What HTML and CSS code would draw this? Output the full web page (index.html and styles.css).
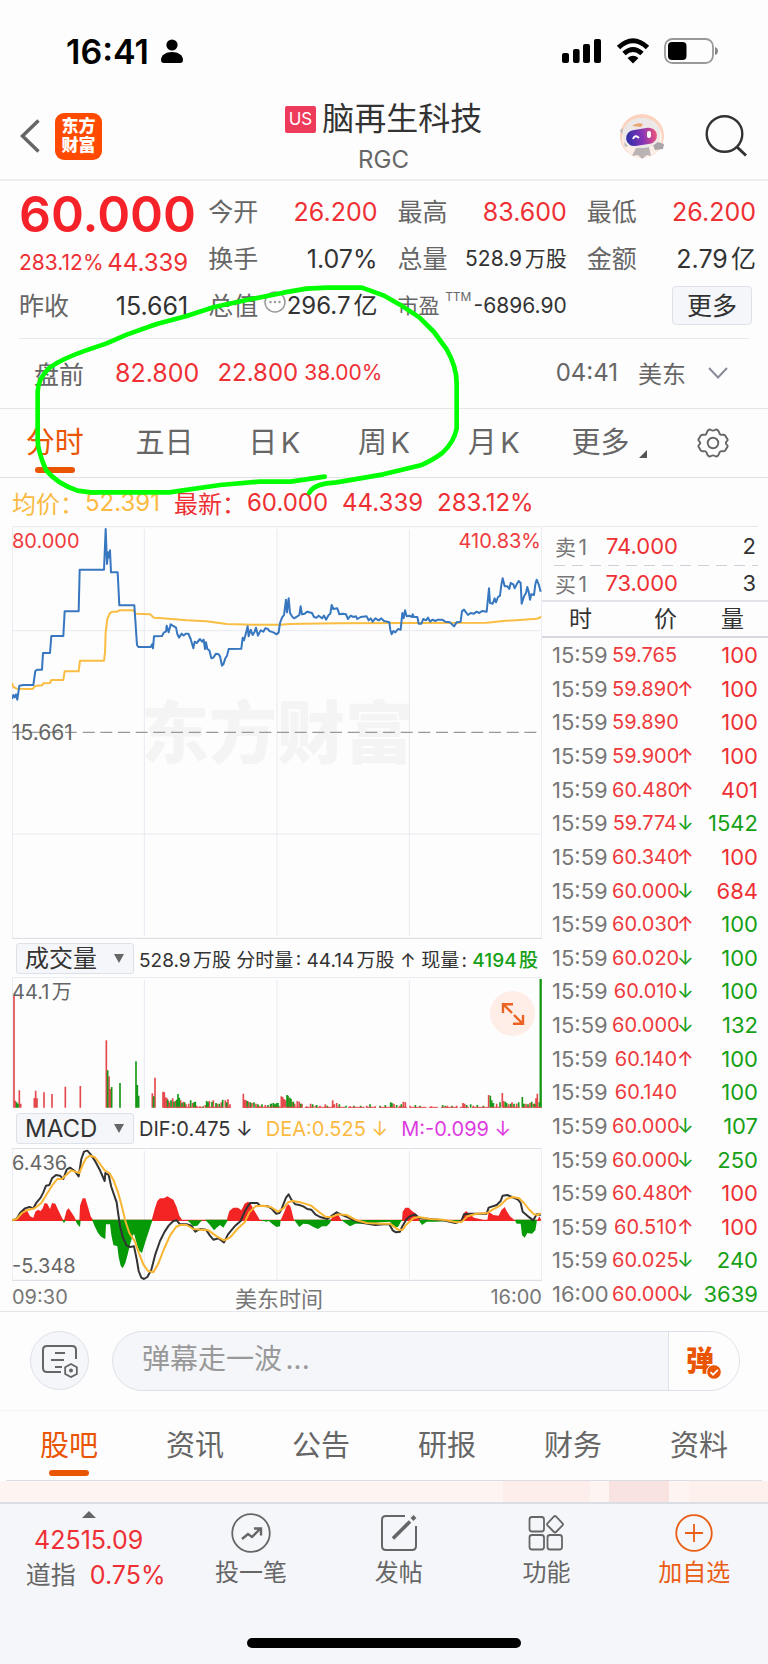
FILE: index.html
```html
<!DOCTYPE html>
<html lang="zh-CN">
<head>
<meta charset="utf-8">
<meta name="viewport" content="width=device-width, initial-scale=1">
<title>脑再生科技 RGC</title>
<link rel="stylesheet" href="styles.css">
</head>
<body>
<div class="status">
  <div class="status-left">
    <span>16:41</span>
    <svg width="22" height="24" viewBox="0 0 22 24"><circle cx="11" cy="6" r="5.6"/><path d="M0 21c0-5 5-8 11-8s11 3 11 8q0 3-3 3H3q-3 0-3-3z"/></svg>
  </div>
  <div class="status-right">
    <svg width="40" height="26" viewBox="0 0 40 26"><rect x="0" y="15" width="7" height="10" rx="2"/><rect x="11" y="11" width="6.600" height="14" rx="2"/><rect x="21" y="6" width="7" height="19" rx="2"/><rect x="32" y="1" width="7" height="24" rx="2"/></svg>
    <svg width="34" height="26" viewBox="0 0 34 26"><g fill="none" stroke="#000" stroke-width="5"><path d="M2.500 9.500Q17-4 31.500 9.500"/><path d="M8 15.500q9-8 18 0"/></g><path d="M17 25.500l-5.500-5.500q5.500-4.500 11 0z"/></svg>
    <svg width="54" height="26" viewBox="0 0 54 26"><rect x="1" y="1" width="48" height="24" rx="7.500" fill="none" stroke="#999" stroke-width="1.800"/><rect x="4" y="4" width="18.500" height="18" rx="4"/><path d="M51 9q3 1 3 4t-3 4z" fill="#888"/></svg>
  </div>
</div>

<header class="header">
  <div class="header-left">
    <button class="plain" aria-label="返回"><svg width="20" height="34" viewBox="0 0 20 34"><path d="M18.500 1.500L2.500 17l16 15.500" fill="none" stroke="#666" stroke-width="3.500"/></svg></button>
    <div class="logo"><span>东方</span><span>财富</span></div>
  </div>
  <div class="header-title">
    <h1><span class="market">US</span>脑再生科技</h1>
    <p>RGC</p>
  </div>
  <div class="header-right">
    <svg width="46" height="46" viewBox="0 0 46 46"><defs><linearGradient id="visor"><stop offset="0" stop-color="#2b2fa8"/><stop offset=".55" stop-color="#8a35b5"/><stop offset="1" stop-color="#f0557a"/></linearGradient></defs><circle cx="23" cy="23" r="22" fill="#fbd3bf"/><circle cx="23" cy="25" r="20" fill="#fdeee7"/><path d="M17 35l-4 8 6-1 4 4 5-4 4 1-2-9z" fill="#b9b3b3"/><path d="M34 32l5-3 6 2-1 5-8 1z" fill="#a9a5aa"/><path d="M4 24C3 12 12 5 23 5s19 7 18 16c0 9-8 14-18 14S5 32 4 24z" fill="#ece8e8"/><path d="M4 15l-3 2 2 5zM5 29l4 4-3 1z" fill="#bbb"/><path d="M13 13q5-4 11-2l-2 3z" fill="#eaa66f"/><rect x="7" y="16" width="31" height="16" rx="8" fill="url(#visor)" transform="rotate(-9 22 24)"/><path d="M14 26q2-5 6-1" fill="none" stroke="#fff" stroke-width="2"/><rect x="28" y="18" width="4" height="7" rx="2" fill="#fff"/></svg>
    <button class="plain" aria-label="搜索"><svg width="42" height="42" viewBox="0 0 42 42"><g fill="none" stroke="#333"><circle cx="19.500" cy="19" r="17.800" stroke-width="2.400"/><path d="M32 32l9 8.500" stroke-width="3"/></g></svg></button>
  </div>
</header>

<section class="summary">
  <div class="quote">
    <div class="price">60.000</div>
    <div class="pair"><span class="k">今开</span><span class="up">26.200</span></div>
    <div class="pair"><span class="k">最高</span><span class="up">83.600</span></div>
    <div class="pair"><span class="k">最低</span><span class="up">26.200</span></div>
    <div class="pair change"><span class="up small">283.12%</span><span class="up mid">44.339</span></div>
    <div class="pair"><span class="k">换手</span><span>1.07%</span></div>
    <div class="pair"><span class="k">总量</span><span class="small">528.9万股</span></div>
    <div class="pair"><span class="k">金额</span><span>2.79亿</span></div>
    <div class="pair"><span class="k">昨收</span><span>15.661</span></div>
    <div class="pair"><span class="k">总值</span><svg class="hint" width="22" height="22" viewBox="0 0 22 22"><circle cx="11" cy="11" r="10" fill="none" stroke="#999" stroke-width="1.500"/><circle cx="6.500" cy="11" r="1.200"/><circle cx="11" cy="11" r="1.200"/><circle cx="15.500" cy="11" r="1.200"/></svg><span class="mid">296.7亿</span></div>
    <div class="pair"><span class="k small">市盈<sup>TTM</sup></span><span class="small">-6896.90</span></div>
    <div class="pair end"><button class="more">更多</button></div>
  </div>
  <div class="premarket">
    <span class="k">盘前</span><span class="up pm-price">82.800</span><span class="up mid">22.800</span><span class="up small pm-pct">38.00%</span>
    <span class="k mid pm-time">04:41</span><span class="k mid">美东</span>
    <button class="plain" aria-label="展开"><svg width="20" height="12" viewBox="0 0 20 12"><path d="M1 1l9 9.500L19 1" fill="none" stroke="#888b98" stroke-width="2"/></svg></button>
  </div>
  <nav class="periods">
    <button class="tab active">分时</button>
    <button class="tab">五日</button>
    <button class="tab">日K</button>
    <button class="tab">周K</button>
    <button class="tab">月K</button>
    <button class="tab">更多<svg class="corner" width="8" height="8" viewBox="0 0 8 8"><path d="M8 0v8H0z" fill="#555"/></svg></button>
    <button class="tab" aria-label="设置"><svg width="32" height="30" viewBox="0 0 32 30"><g fill="none" stroke="#666" stroke-width="1.900"><path d="M11 2.500Q12.500 1 14 2q2 1.300 4 0 1.500-1 3 .5 1 1 1.500 3 .8 1.800 3 1.300 2.500-.3 3 1.200l1.800 3q.8 1.500-.5 2.300-2 1.700 0 3.400 1.300.8.5 2.300l-1.800 3q-.5 1.500-3 1.200-2.200-.5-3 1.300-.5 2-1.500 3-1.500 1.500-3 .5-2-1.300-4 0-1.500 1-3-.5-1-1-1.500-3-.8-1.800-3-1.300-2.500.3-3-1.200L1.700 19q-.8-1.500.5-2.300 2-1.700 0-3.400-1.300-.8-.5-2.300l1.800-3q.5-1.500 3-1.200 2.200.5 3-1.300.5-2 1.500-3z"/><circle cx="16" cy="15" r="5.300"/></g></svg></button>
  </nav>
  <svg class="marker" viewBox="0 0 2304 960" preserveAspectRatio="none" aria-hidden="true"><path d="M974 890L872 905H778L660 915 508 937H272L232 932C190 917 155 892 138 870 125 840 113 810 113 780V635C114 600 130 580 150 562Q190 535 256 512L320 490 380 464 470 432 560 408 640 382 750 358 850 338 920 326 980 323H1086L1150 346 1200 374 1258 412 1302 456 1340 508Q1370 560 1370 610V746Q1362 786 1328 818 1300 840 1262 856L1150 883 1010 907 980 910Q940 916 928 938"/></svg>
</section>

<div class="legend"><span class="avg name">均价：</span><span class="avg">52.391</span><span class="up name">最新：</span><span class="up">60.000</span><span class="up">44.339</span><span class="up">283.12%</span></div>

<main class="board">
  <section class="charts">
    <div class="chart chart-price">
      <span class="watermark">东方财富</span>
      <svg viewBox="36 51 1590 1239" preserveAspectRatio="none">
        <g class="grid"><path d="M36 53H1624M37 53V1288M433 60V1280M831 60V1280M1228 60V1280M1625 53V1290M36 365H1626M36 975H1626"/><path class="axis" d="M36 1288H1626"/></g>
        <path d="M36 670H230M248 670H1626" stroke="#999" stroke-width="4" stroke-dasharray="36 17" fill="none"/>
        <g fill="none" stroke-width="6" stroke-linejoin="round">
          <path stroke="#f9bd43" d="M36 522L40 534 50 539 98 540 104 532 110 530 126 529 130 523 150 522 154 513 190 513 194 487 236 487 240 455 312 455 315 430 317 370 322 330 330 312 338 308 352 308 358 304 400 304 408 314 450 316 462 326 478 327 560 334 620 337 680 345 760 347 840 347 870 345 910 344 1010 343 1460 341 1510 336 1570 332 1610 329 1618 327 1623 322"/>
          <path stroke="#3777bf" d="M36 570L40 558 44 565 48 556 52 572 58 530 70 528 100 528 106 486 112 482 126 482 129 432 150 432 154 381 190 381 194 307 236 307 239 182 312 182 317 60 321 165 325 130 328 145 330 124 333 190 353 190 358 289 403 289 411 408 415 414 452 414 457 405 459 418 462 382 486 381 492 370 498 368 500 350 506 370 512 346 518 350 522 352 528 356 532 375 537 386 545 374 551 380 557 374 565 374 572 390 580 418 584 398 590 402 600 390 606 398 611 392 615 420 618 400 622 420 628 424 634 448 640 446 648 434 656 436 660 442 666 470 670 466 676 448 681 440 686 420 724 419 728 386 732 394 738 372 743 352 746 382 752 362 758 378 764 368 768 356 774 380 782 364 790 368 796 358 804 360 808 366 820 370 830 376 836 370"/>
          <path transform="translate(810 0)" stroke="#3777bf" d="M20 376L26 370 30 342 36 326 42 318 48 272 51 310 56 268 60 312 66 322 72 328 82 322 88 318 92 292 96 316 104 314 112 308 126 312 132 324 140 326 146 320 156 328 162 320 168 332 176 318 181 314 185 288 190 300 202 298 208 316 218 314 228 316 234 330 242 320 250 324 258 322 262 330 272 324 290 322 296 334 302 328 308 338 316 328 326 334 334 328 342 336 358 340 361 362 365 376 370 366 376 370 384 360 392 362 397 312 401 328 405 304 410 322 418 320 426 324 428 316 432 324 442 324 446 344 454 344 460 330 468 334 474 326 480 338 488 332 496 336 504 332 516 332 526 338 540 340 552 352 560 340 572 338 576 306 582 302 588 310 594 318 602 312 612 314 620 308 628 312 636 306 650 308 657 238 660 282 668 284 674 268 678 280 684 264 690 260 694 228 698 208 704 232 712 232 718 240 722 222 730 226 734 238 740 226 746 216 752 222 755 284 762 262 768 252 772 234 776 248 780 272 784 256 792 258 796 226 800 212 806 226 812 248"/>
        </g>
      </svg>
      <span class="tag top up">80.000</span><span class="tag top right up">410.83%</span><span class="tag middle">15.661</span>
    </div>
    <div class="indicator">
      <span class="pick"><select aria-label="指标"><option>成交量</option></select></span>
      <span class="readout">528.9万股 分时量: 44.14万股 ↑ 现量: <b class="down">4194股</b></span>
    </div>
    <div class="chart chart-volume">
      <svg viewBox="36 144 1590 396" preserveAspectRatio="none">
        <g class="grid"><path d="M36 145H1626M37 145V538M433 152V538M831 152V538M1228 152V538M1625 145V540"/></g>
        <g fill="none" stroke-width="5">
          <path stroke="#e5494d" d="M42 536V200M46 536V515M58 536V484M62 536V524M103 536V507M107 536V485M111 536V508M132 536V490M156 536V495M196 536V473M241 536V471M319 536V334M327 536V442M331 536V480M457 536V493M465 536V446M489 536V488M493 536V490M497 536V505M501 536V508M505 536V515M509 536V520M518 536V508M526 536V516M542 536V514M550 536V518M558 536V526M566 536V524M578 536V522M590 536V530M600 536V532M616 536V528M628 536V516M640 536V514M652 536V524M664 536V520M676 536V514M684 536V511M690 536V526M730 536V494M734 536V512M738 536V514M746 536V518M756 536V522M768 536V524M780 536V530M796 536V528"/>
          <path stroke="#189818" d="M50 536V520M54 536V524M323 536V424M335 536V474M360 536V462M408 536V397M412 536V468M416 536V500M461 536V502M503 536V512M513 536V514M522 536V518M530 536V512M534 536V495M538 536V506M546 536V522M554 536V520M572 536V514M582 536V520M586 536V518M610 536V532M620 536V516M624 536V520M636 536V518M648 536V522M658 536V524M668 536V512M680 536V520M742 536V516M751 536V520M762 536V520M774 536V526M786 536V526M804 536V528M814 536V524M820 536V522M826 536V526M834 536V522"/>
          <g transform="translate(810 0)">
            <path stroke="#e5494d" d="M6 536V530M34 536V502M38 536V504M42 536V510M46 536V514M56 536V506M66 536V518M74 536V524M82 536V516M88 536V518M96 536V524M110 536V532M122 536V524M136 536V530M150 536V530M166 536V526M188 536V514M193 536V526M200 536V522M240 536V532M290 536V530M316 536V532M372 536V524M390 536V530M400 536V518M406 536V520M420 536V530M484 536V532M532 536V530M560 536V530M579 536V522M584 536V524M610 536V530M656 536V498M680 536V524M697 536V492M701 536V516M716 536V526M726 536V520M740 536V524M768 536V524M780 536V522M790 536V524M798 536V508M802 536V494"/>
            <path stroke="#189818" d="M2 536V524M12 536V524M20 536V522M26 536V530M51 536V498M54 536V500M60 536V506M63 536V510M70 536V518M92 536V524M128 536V526M140 536V528M172 536V530M208 536V526M228 536V530M252 536V530M272 536V530M300 536V526M330 536V530M346 536V528M362 536V520M366 536V522M380 536V528M394 536V526M436 536V528M450 536V530M518 536V528M526 536V530M546 536V530M590 536V528M602 536V526M622 536V528M640 536V530M661 536V500M665 536V514M670 536V522M690 536V520M706 536V518M710 536V522M722 536V524M732 536V524M746 536V520M757 536V504M762 536V524M774 536V526M785 536V518M794 536V524M808 536V520"/>
            <path stroke="#159815" stroke-width="7" d="M812 536V150"/>
          </g>
          <path stroke="#e5494d" stroke-width="3" stroke-dasharray="28 9 50 6" d="M490 535H692M728 535H1624"/>
        </g>
      </svg>
      <span class="tag top">44.1万</span>
      <button class="expand" aria-label="全屏"><svg width="24" height="24" viewBox="0 0 24 24"><g fill="none" stroke="#ea6322" stroke-width="2.400"><path d="M2 11V2.200h10M2 2l9 9M22 13v8.800H12M22 22l-9-9"/></g></svg></button>
    </div>
    <div class="indicator tall">
      <span class="pick"><select aria-label="副图指标"><option>MACD</option></select></span>
      <span class="readout macd"><span>DIF:0.475 ↓</span><span class="avg">DEA:0.525 ↓</span><span class="m">M:-0.099 ↓</span></span>
    </div>
    <div class="chart chart-macd">
      <svg viewBox="36 657 1590 399" preserveAspectRatio="none">
        <g class="grid"><path d="M37 658V1055M433 666V1050M831 666V1050M1228 666V1050M1625 658V1055"/><path class="axis" d="M36 658H1626M36 1054H1626"/></g>
        <path fill="#f22424" d="M36 872H1622V876H36ZM40 874L66 850 74 840 82 846 90 862 100 866 106 848 114 842 122 846 128 838 134 822 142 824 150 840 156 822 166 824 176 846 186 866 190 874ZM192 874L200 844 206 838 214 850 222 862 228 874ZM238 874L240 830 248 808 256 808 264 834 272 862 280 874ZM455 874L464 840 472 816 480 808 492 808 502 802 512 808 520 812 530 834 538 860 546 872 570 874ZM680 874L688 846 700 836 714 836 724 844 734 824 744 818 752 824 760 840 772 860 780 874ZM842 874L854 846 860 830 866 826 872 834 880 866 882 874ZM990 874L1000 862 1014 856 1020 866 1024 874ZM1206 874L1208 848 1216 836 1226 836 1236 846 1250 856 1260 872 1262 874ZM1384 874L1390 854 1398 846 1410 856 1422 866 1450 872 1460 874ZM1462 874L1466 848 1480 858 1496 860 1504 844 1514 834 1520 846 1530 862 1544 874ZM1612 874L1618 862 1624 874Z"/>
        <path fill="#069b06" d="M186 874L192 882 198 874ZM226 874L232 886 240 894 242 874ZM276 872L284 892 294 912 304 924 316 930 318 886 330 886 334 918 340 948 352 952 356 984 362 1010 368 1018 376 1002 382 980 392 940 398 920 402 914 412 950 418 966 426 972 432 952 440 926 450 896 458 872ZM562 874L580 892 592 890 602 878 608 874ZM615 872L628 886 642 904 650 896 660 888 670 896 680 880 684 872ZM780 873L800 878 806 875 818 886 830 894 840 892 842 873ZM882 872L898 894 910 884 926 886 940 894 954 900 966 892 980 892 990 882 994 872ZM1024 873L1036 882 1050 892 1066 884 1110 884 1140 880 1170 878 1180 894 1194 894 1204 876 1208 873ZM1256 873L1266 888 1280 878 1310 878 1350 876 1385 880 1388 873ZM1544 872L1550 884 1562 884 1566 918 1574 926 1582 912 1596 914 1606 904 1610 880 1610 872Z"/>
        <g fill="none" stroke-width="6" stroke-linejoin="round">
          <path stroke="#333" d="M36 874L50 870 60 852 75 838 88 834 100 838 110 820 122 806 130 790 138 770 148 768 156 748 168 738 180 740 190 750 200 722 210 716 224 726 236 742 244 690 252 668 262 665 272 676 284 694 300 724 314 756 316 732 326 738 334 774 350 820 354 850 360 890 368 924 380 950 390 954 402 952 410 990 416 1026 424 1046 432 1050 442 1044 454 1022 466 976 480 936 494 908 506 890 520 876 530 874 540 886 560 886 574 890 586 908 600 900 618 902 630 920 640 932 656 928 672 940 684 916 704 892 722 876 736 844 750 822 772 822 780 830 804 832 816 840 828 854 838 852 844 842 850 826 858 806 866 796 874 812 886 826 898 828 910 832 922 840 934 842 946 856 960 864 982 870 996 860 1010 850 1022 856 1042 864 1062 874 1090 882 1126 888 1150 886 1168 886 1178 904 1188 910 1200 908 1208 890 1220 870 1230 862 1244 856 1260 868 1290 870 1330 874 1366 882 1384 876 1392 856 1410 854 1460 854 1466 836 1490 828 1502 816 1508 800 1522 798 1536 804 1554 812 1562 822 1568 848 1584 862 1600 874 1610 856 1622 858"/>
          <path stroke="#f9b52f" d="M36 874L50 870 66 852 80 844 104 838 124 822 140 796 156 770 172 750 186 750 196 740 214 724 238 732 248 708 258 688 270 680 284 684 298 702 314 724 328 732 340 752 354 790 366 834 376 876 388 912 404 936 416 970 430 1006 444 1026 460 1030 474 1006 492 960 510 920 528 894 540 888 560 888 580 900 604 902 626 904 650 922 672 934 690 926 712 900 734 880 748 850 766 832 790 830 812 834 834 848 850 838 864 820 878 816 902 820 934 830 958 850 978 864 994 864 1014 856 1040 858 1070 874 1100 882 1140 884 1170 884 1194 902 1208 902 1218 888 1240 868 1256 864 1290 870 1330 872 1370 880 1386 878 1402 862 1430 854 1462 852 1474 844 1500 830 1520 810 1538 804 1558 808 1572 822 1586 840 1602 856 1614 858 1622 852"/>
        </g>
      </svg>
      <span class="tag top">6.436</span><span class="tag bottom">-5.348</span>
    </div>
    <div class="times"><span>09:30</span><span class="zone">美东时间</span><span>16:00</span></div>
  </section>

  <aside class="book">
    <div class="level"><span>卖1</span><span class="up">74.000</span><span class="lot">2</span></div>
    <div class="level buy"><span>买1</span><span class="up">73.000</span><span class="lot">3</span></div>
    <table class="ticks">
      <thead><tr><th>时</th><th>价</th><th></th><th>量</th></tr></thead>
      <tbody>
        <tr><td>15:59</td><td>59.765</td><td></td><td class="up">100</td></tr>
        <tr><td>15:59</td><td>59.890</td><td class="up">↑</td><td class="up">100</td></tr>
        <tr><td>15:59</td><td>59.890</td><td></td><td class="up">100</td></tr>
        <tr><td>15:59</td><td>59.900</td><td class="up">↑</td><td class="up">100</td></tr>
        <tr><td>15:59</td><td>60.480</td><td class="up">↑</td><td class="up">401</td></tr>
        <tr><td>15:59</td><td>59.774</td><td class="down">↓</td><td class="down">1542</td></tr>
        <tr><td>15:59</td><td>60.340</td><td class="up">↑</td><td class="up">100</td></tr>
        <tr><td>15:59</td><td>60.000</td><td class="down">↓</td><td class="up">684</td></tr>
        <tr><td>15:59</td><td>60.030</td><td class="up">↑</td><td class="down">100</td></tr>
        <tr><td>15:59</td><td>60.020</td><td class="down">↓</td><td class="down">100</td></tr>
        <tr><td>15:59</td><td>60.010</td><td class="down">↓</td><td class="down">100</td></tr>
        <tr><td>15:59</td><td>60.000</td><td class="down">↓</td><td class="down">132</td></tr>
        <tr><td>15:59</td><td>60.140</td><td class="up">↑</td><td class="down">100</td></tr>
        <tr><td>15:59</td><td>60.140</td><td></td><td class="down">100</td></tr>
        <tr><td>15:59</td><td>60.000</td><td class="down">↓</td><td class="down">107</td></tr>
        <tr><td>15:59</td><td>60.000</td><td class="down">↓</td><td class="down">250</td></tr>
        <tr><td>15:59</td><td>60.480</td><td class="up">↑</td><td class="up">100</td></tr>
        <tr><td>15:59</td><td>60.510</td><td class="up">↑</td><td class="up">100</td></tr>
        <tr><td>15:59</td><td>60.025</td><td class="down">↓</td><td class="down">240</td></tr>
        <tr><td>16:00</td><td>60.000</td><td class="down">↓</td><td class="down">3639</td></tr>
      </tbody>
    </table>
  </aside>
</main>

<div class="comment">
  <button class="round" aria-label="弹幕设置"><svg width="38" height="34" viewBox="0 0 38 34"><g fill="none" stroke="#666" stroke-width="2"><path d="M20 28H6q-4 0-4-4V6q0-4 4-4h25q4 0 4 4v9"/><path d="M14 9h10M10 16h13M14 23h7"/><path d="M30 19.500l6.500 3.500v7.500L30 34l-6.500-3.500V23z" transform="translate(3 2.500) scale(.9)"/></g><circle cx="30" cy="26.500" r="2" fill="#666"/></svg></button>
  <div class="field">
    <input type="text" placeholder="弹幕走一波..." aria-label="弹幕">
    <button class="send" aria-label="弹幕开关"><span>弹</span><svg width="16" height="16" viewBox="0 0 16 16"><circle cx="8" cy="8" r="7.300" fill="#ea5504" stroke="#fff"/><path d="M4.500 8l2.500 2.800 4.800-5" fill="none" stroke="#fff" stroke-width="1.800"/></svg></button>
  </div>
</div>

<nav class="sections">
  <button class="tab active">股吧</button><button class="tab">资讯</button><button class="tab">公告</button><button class="tab">研报</button><button class="tab">财务</button><button class="tab">资料</button>
</nav>
<div class="banner"></div>

<footer class="dock">
  <div class="dock-row">
    <button class="index"><svg width="14" height="7" viewBox="0 0 14 7"><path d="M7 0l7 7H0z" fill="#666"/></svg><span class="up">42515.09</span><span class="index-line">道指<span class="up">0.75%</span></span></button>
    <button class="item"><svg width="40" height="40" viewBox="0 0 40 40"><g fill="none" stroke="#666"><circle cx="20" cy="20" r="18.800" stroke-width="1.800"/><path d="M11 26l6-5 4 3 8-8M23 15.500h7v7" stroke-width="2.400"/></g></svg>投一笔</button>
    <button class="item"><svg width="40" height="40" viewBox="0 0 40 40"><g fill="none" stroke="#666" stroke-width="2"><path d="M26 3H7Q3 3 3 7v26q0 4 4 4h26q4 0 4-4V13"/><path d="M14 25.500L31 8.500" stroke-width="3.600"/><path d="M33 6.500l3-3" stroke-width="4"/></g></svg>发帖</button>
    <button class="item"><svg width="40" height="40" viewBox="0 0 40 40"><g fill="none" stroke="#666" stroke-width="1.800"><rect x="3.500" y="4" width="14.500" height="14.500" rx="2.500"/><rect x="3.500" y="22" width="14.500" height="14.500" rx="2.500"/><rect x="21.500" y="22" width="14.500" height="14.500" rx="2.500"/><path d="M28 3.500q1-1 2 0l6.500 6.800q1 1 0 2L30 19q-1 1-2 0l-6.500-6.700q-1-1 0-2z"/></g></svg>功能</button>
    <button class="item add"><svg width="40" height="40" viewBox="0 0 40 40"><g fill="none" stroke="#ea5d14" stroke-width="1.800"><circle cx="20" cy="20" r="17.800"/><path d="M11 20h18M20 11v18"/></g></svg>加自选</button>
  </div>
  <div class="home"></div>
</footer>
</body>
</html>
```

FILE: styles.css
```css
* { box-sizing: border-box; }
body {
  margin: 0;
  min-height: 100vh;
  display: flex;
  flex-direction: column;
  background: #fdfdfd;
  color: #333;
  font-family: Inter, "Noto Sans CJK SC", sans-serif;
  font-size: 25px;
  text-autospace: normal;
}
button, input, select { font: inherit; color: inherit; }
button { border: 0; padding: 0; background: none; }
svg { display: block; flex: none; }
.plain { display: flex; }
.up { color: #ee3034; }
.down { color: #16a016; }
.avg { color: #fbba41; }
.small { font-size: 21px; }
.mid { font-size: 24px; }
.k { color: #666; }

/* status bar */
.status { display: flex; justify-content: space-between; align-items: center; height: 99px; padding: 3px 50px 0 66px; color: #000; }
.status-left, .status-right { display: flex; align-items: center; }
.status-left { gap: 12px; font-size: 34px; font-weight: 600; }
.status-right { gap: 14px; }

/* header */
.header { display: grid; grid-template-columns: 1fr auto 1fr; align-items: center; padding: 0 21px 6px 20px; border-bottom: 2px solid #eee; }
.header-left { display: flex; align-items: center; gap: 15px; }
.logo { display: flex; flex-direction: column; align-items: center; justify-content: center; width: 47px; height: 47px; border-radius: 9px; background: #ff4a00; color: #fff; font-size: 17px; font-weight: 900; line-height: 19px; }
.header-title h1 { display: flex; align-items: center; gap: 6px; margin: 0; font-size: 32px; font-weight: 400; line-height: 40px; }
.header-title p { margin: 8px 0 0; text-align: center; font-size: 24px; line-height: 26px; color: #666; }
.market { padding: 0 4px; border-radius: 2px; background: #ee3a5b; color: #fff; font-size: 17px; line-height: 27px; }
.header-right { display: flex; justify-content: flex-end; align-items: center; gap: 40px; }

/* quote */
.summary { position: relative; }
.quote { display: grid; grid-template-columns: repeat(4, minmax(0, 1fr)); grid-auto-rows: 47px; column-gap: 20px; margin-bottom: 9px; padding: 7px 12px 0 19px; }
.price { color: #f5222a; font-size: 50px; font-weight: 600; line-height: 52px; }
.pair { display: flex; justify-content: space-between; align-items: center; white-space: nowrap; line-height: 30px; }
.change { padding-top: 8px; }
.end { justify-content: flex-end; }
.hint { fill: #999; margin: 0 -4px 8px 0; }
.pair sup { font-size: 12px; line-height: 0; vertical-align: 12px; margin-left: 3px; }
.more { width: 80px; height: 39px; margin-right: 4px; border: 1px solid #dfe1ea; border-radius: 4px; background: #f5f6f9; }
.premarket { display: flex; align-items: center; height: 70px; margin: 0 19px; padding: 0 21px 2px 15px; border-top: 1px solid #e8e8ec; }
.pm-price { margin: 0 18px 0 31px; }
.pm-pct { margin-left: 6px; }
.pm-time { margin: 0 20px 0 auto; }
.premarket .plain { margin-left: 22px; }
.tab { position: relative; display: flex; align-items: center; justify-content: center; color: #666; font-size: 29px; line-height: 40px; }
.active { color: #ea5504; }
.active::after { content: ""; position: absolute; bottom: 4px; left: 50%; width: 40px; height: 6px; margin-left: -20px; border-radius: 3px; background: #ea5504; }
.periods { display: grid; grid-template-columns: repeat(7, 1fr); height: 70px; border-top: 1px solid #e4e4ea; border-bottom: 1px solid #e0e0e6; }
.corner { align-self: flex-end; margin: 0 -12px 19px 10px; }
.marker { position: absolute; left: 0; top: -1px; width: 100%; height: 320px; fill: none; stroke: #0f0; stroke-width: 14; stroke-linecap: round; stroke-linejoin: round; pointer-events: none; z-index: 2; }

.legend { display: flex; align-items: center; height: 48px; padding-left: 12px; gap: 14px; font-size: 24px; white-space: nowrap; }
.legend .name { margin-right: -13px; }

/* charts */
.board { display: flex; border-bottom: 1px solid #e4e4ea; }
.charts { flex: 1; min-width: 0; padding-left: 12px; }
.chart { position: relative; }
.chart svg { width: 100%; height: 100%; }
.chart > svg { position: relative; }
.chart-price { height: 413px; }
.chart-volume { height: 132px; }
.chart-macd { height: 133px; }
.grid path { fill: none; stroke: #e9eaf2; stroke-width: 3; }
.grid .axis { stroke: #d8d9e2; }
.watermark { position: absolute; left: 0; right: 0; top: 50%; margin-top: -48px; text-align: center; color: #f4f4f4; font-size: 68px; font-weight: 900; line-height: 96px; }
.tag { position: absolute; left: 0; font-size: 20px; line-height: 24px; color: #666; }
.tag.up { color: #ee3a3c; }
.top { top: 3px; }
.middle { top: 50%; margin-top: -12px; font-size: 21px; }
.bottom { bottom: 3px; }
.right { left: auto; right: 1px; }
.indicator { display: flex; align-items: center; height: 38px; padding-left: 4px; gap: 5px; }
.tall { height: 39px; }
.pick { position: relative; flex: none; width: 118px; height: 31px; }
.pick select { appearance: none; width: 100%; height: 100%; padding: 0 0 0 8px; border: 1px solid #dfe1ea; border-radius: 3px; background: #f5f6f9; font-size: 24px; line-height: 29px; }
.pick::after { content: ""; position: absolute; right: 10px; top: 11px; border: 5px solid transparent; border-top: 9px solid #666; border-bottom: 0; pointer-events: none; }
.readout { font-size: 19px; white-space: nowrap; }
.readout b { font-weight: 500; }
.macd { display: flex; gap: 13px; font-size: 20px; }
.m { color: #dc3be0; }
.expand { position: absolute; right: 7px; top: 14px; display: flex; align-items: center; justify-content: center; width: 45px; height: 45px; border-radius: 50%; background: #feeee7; }
.chart .expand svg { width: 24px; height: 24px; }
.times { display: flex; justify-content: space-between; align-items: center; height: 29px; padding-top: 2px; font-size: 20px; color: #777; }
.zone { font-size: 22px; }

/* order book */
.book { flex: 0 0 226px; }
.level { display: grid; grid-template-columns: 44px 79px 1fr; align-items: center; height: 39px; margin: 0 10px 0 1px; padding: 0 2px 0 12px; border-top: 1px solid #e6e6ec; font-size: 22px; }
.level span:first-child { color: #777; font-size: 21px; }
.level span:nth-child(2), .lot { text-align: right; }
.buy { height: 35px; border-top: 0; background: repeating-linear-gradient(90deg, #cfd0da 0 11px, transparent 11px 18px) 11px 0 / 100% 1px no-repeat; }
.ticks { width: 100%; height: 711px; table-layout: fixed; border-collapse: collapse; font-size: 20px; line-height: 24px; white-space: nowrap; }
.ticks th { height: 36px; padding: 0; border-top: 2px solid #e3e3ea; border-bottom: 2px solid #d8d8e0; font-size: 23px; font-weight: 400; }
.ticks th:nth-child(1) { width: 70px; padding-left: 7px; }
.ticks th:nth-child(2) { width: 65px; text-align: right; }
.ticks th:nth-child(3) { width: 16px; }
.ticks th:nth-child(4) { text-align: right; padding-right: 24px; }
.ticks td { padding: 0; text-align: right; }
.ticks td:nth-child(1) { padding-left: 10px; text-align: left; color: #777; font-size: 22px; }
.ticks td:nth-child(2) { color: #ee3a3c; }
.ticks td:nth-child(3) { text-align: center; }
.ticks td:nth-child(4) { padding-right: 10px; font-size: 22px; }

/* comments */
.comment { display: flex; gap: 23px; padding: 19px 28px 19px 30px; border-bottom: 1px solid #f4f4f6; }
.round { display: flex; align-items: center; justify-content: center; flex: none; width: 59px; height: 59px; border: 1px solid #dfe1ea; border-radius: 50%; background: #f5f6f9; }
.field { display: flex; flex: 1; min-width: 0; height: 60px; border: 1px solid #dfe1ea; border-radius: 30px; background: #f5f6f9; overflow: hidden; }
.field input { flex: 1; min-width: 0; border: 0; padding: 0 0 4px 29px; background: none; font-size: 28px; outline: 0; }
.field input::placeholder { color: #999; opacity: 1; }
.send { position: relative; width: 71px; border-left: 1px solid #dfe1ea; background: #fdfdfd; color: #ea5504; font-size: 28px; font-weight: 900; line-height: 58px; text-align: left; padding-left: 17px; }
.send svg { position: absolute; left: 37px; top: 32px; }
.sections { display: grid; grid-template-columns: repeat(6, 1fr); height: 70px; margin: 0 6px; border-bottom: 1px solid #dcdce4; }
.banner { height: 21px; background: linear-gradient(90deg, #fef5f3 65.5%, #fdeeeb 0 76.8%, #fef5f3 0 79.3%, #f9e3e0 0 87.1%, #fef5f3 0 89.7%, #fdf0ed 0); }

/* dock */
.dock { flex: 1; display: flex; flex-direction: column; justify-content: space-between; border-top: 2px solid #dcdee5; background: #f5f6f9; }
.dock-row { display: grid; grid-template-columns: 6fr repeat(4, 5fr); }
.index, .item { display: flex; flex-direction: column; align-items: center; }
.index { padding-top: 7px; line-height: 35px; }
.index > .up { margin-top: 5px; }
.index-line { display: flex; gap: 14px; padding-left: 14px; color: #666; line-height: 34px; }
.item { padding-top: 9px; gap: 5px; color: #666; font-size: 24px; line-height: 30px; }
.add { color: #ea5d14; }
.home { align-self: center; width: 274px; height: 10px; margin: 16px 0; border-radius: 5px; background: #000; }
```
